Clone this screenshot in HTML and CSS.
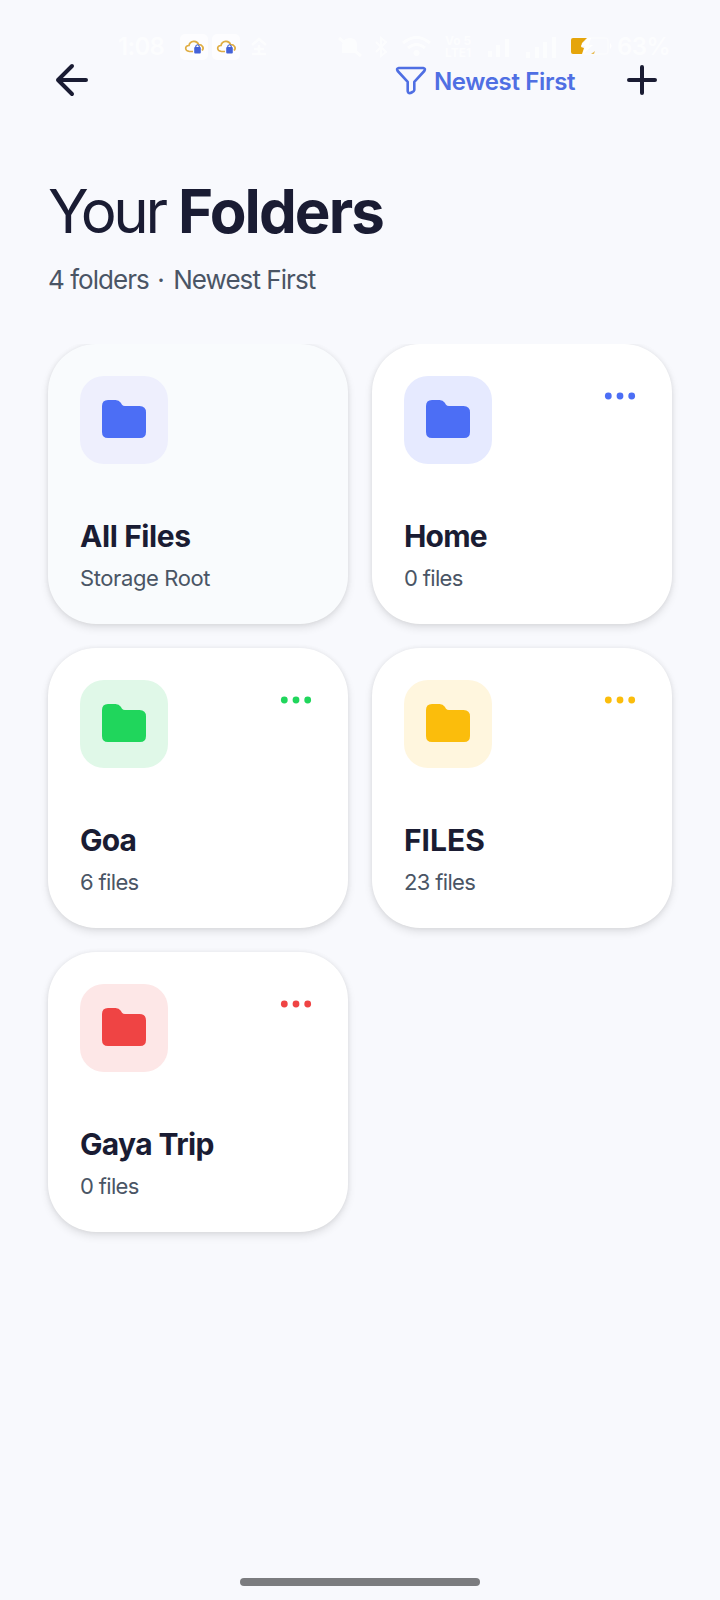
FILE: index.html
```
<!DOCTYPE html>
<html lang="en">
<head>
    <meta charset="UTF-8">
    <meta name="viewport" content="width=device-width, initial-scale=1.0">
    <title>Your Folders</title>
    <link rel="stylesheet" href="styles.css">
</head>
<body>
    <!-- shared icons -->
    <svg class="sprite" width="0" height="0">
        <symbol id="folder" viewBox="0 0 44 38">
            <path d="M6 0H13.500Q17 0 18.800 2.800L20 4.800Q21 6 23 6H37.500Q44 6 44 12.500V32Q44 38 38 38H6Q0 38 0 32V6Q0 0 6 0Z" fill="currentColor"/>
        </symbol>
        <symbol id="dots" viewBox="0 0 40 40">
            <g fill="currentColor">
                <circle cx="8.300" cy="20" r="3.400"/>
                <circle cx="20" cy="20" r="3.400"/>
                <circle cx="31.700" cy="20" r="3.400"/>
            </g>
        </symbol>
        <symbol id="cloud" viewBox="0 0 28 26">
            <rect width="28" height="26" rx="5" fill="#fff" fill-opacity=".7"/>
            <path d="M13 17.500H9.500C4.500 17 4.500 11.500 9 11.500C10 6.500 17 6 18.500 10.500C22.500 10.500 24.500 14 22 16.500" fill="none" stroke="#dfad43" stroke-width="1.700"/>
            <path d="M15.800 13.500V12Q17.500 9.500 19.200 12V13.500" fill="none" stroke="#4562d8" stroke-width="1.200"/>
            <rect x="14.200" y="13" width="6.600" height="6.600" rx="1" fill="#4562d8"/>
        </symbol>
    </svg>

    <div class="status-bar">
        <div class="status-left">
            <span class="time">1:08</span>
            <svg class="cloud" width="28" height="26"><use href="#cloud"/></svg>
            <svg class="cloud" width="28" height="26"><use href="#cloud"/></svg>
            <svg class="app faint" width="20" height="20" viewBox="0 0 20 20" fill="none" stroke="#fff" stroke-width="2.500"><path d="M3 8L10 2L17 8M5 12H15M3 17H17M10 8V17"/></svg>
        </div>
        <div class="status-right">
            <svg class="mute faint" width="26" height="22" viewBox="0 0 26 22"><path d="M5 17V9Q6 2 13 2Q20 2 20 9V17Z" fill="#fff"/><path d="M2 2L24 20" stroke="#fff" stroke-width="3"/></svg>
            <svg class="bluetooth faint" width="14" height="22" viewBox="0 0 14 22" fill="none" stroke="#fff" stroke-width="2"><path d="M2 6L12 16L7 20V2L12 6L2 16"/></svg>
            <svg class="wifi faint" width="33" height="24" viewBox="0 0 33 24" fill="none" stroke="#fff" stroke-width="3"><path d="M3 8Q16.500 -3 30 8M8 13Q16.500 6 25 13"/><circle cx="16.500" cy="18" r="3" fill="#fff" stroke="none"/></svg>
            <span class="volte">Vo 5<br>LTE1</span>
            <svg class="signal-one faint" width="21" height="20" viewBox="0 0 21 20" fill="#fff"><path d="M0 14H4V20H0ZM8 8H12V20H8ZM17 2H21V20H17Z"/></svg>
            <svg class="signal-two faint" width="30" height="22" viewBox="0 0 30 22" fill="#fff"><path d="M0 16H4V22H0ZM9 11H13V22H9ZM17 6H21V22H17ZM26 1H30V22H26Z"/></svg>
            <svg class="battery" width="42" height="18" viewBox="0 0 42 18">
                <rect x="1" y="1" width="36" height="16" rx="3" fill="none" stroke="#fff" stroke-opacity=".4" stroke-width="1.500"/>
                <path d="M2 1H16L11 6L10 10L13 11L11 17H2Q0 17 0 15V3Q0 1 2 1Z" fill="#e5a50b"/>
                <path d="M17 1L10 9H14L12 17L22 8H18L20 1Z" fill="#fff"/>
                <path d="M20 17L24 14L23 17Z" fill="#e8bd59"/>
                <path d="M39 6Q42 9 39 12Z" fill="#fff"/>
            </svg>
            <span class="percent">63%</span>
        </div>
    </div>

    <header class="top-bar">
        <svg class="back" width="36" height="36" viewBox="0 0 36 36"><path d="M32 18H4M18 4L4 18L18 32"/></svg>
        <div class="sort">
            <svg width="32" height="32" viewBox="0 0 32 32"><path d="M3.800 4H28.200Q31 4.500 29.300 7L19.300 17.800V26Q19 27.500 17.500 28L15.500 29Q13 29.500 12.700 27.200V17.800L2.700 7Q1 4.500 3.800 4Z"/></svg>
            <span>Newest First</span>
        </div>
        <svg class="add" width="36" height="36" viewBox="0 0 36 36"><path d="M18 5V31M5 18H31"/></svg>
    </header>

    <section class="heading">
        <h1>Your <b>Folders</b></h1>
        <p>4 folders <span class="sep">·</span> Newest First</p>
    </section>

    <main class="folders">
        <div class="card root">
            <div class="card-top">
                <div class="icon"><svg width="44" height="38"><use href="#folder"/></svg></div>
            </div>
            <h2>All Files</h2>
            <p>Storage Root</p>
        </div>
        <div class="card blue">
            <div class="card-top">
                <div class="icon"><svg width="44" height="38"><use href="#folder"/></svg></div>
                <svg class="more" width="40" height="40"><use href="#dots"/></svg>
            </div>
            <h2>Home</h2>
            <p>0 files</p>
        </div>
        <div class="card green">
            <div class="card-top">
                <div class="icon"><svg width="44" height="38"><use href="#folder"/></svg></div>
                <svg class="more" width="40" height="40"><use href="#dots"/></svg>
            </div>
            <h2>Goa</h2>
            <p>6 files</p>
        </div>
        <div class="card yellow">
            <div class="card-top">
                <div class="icon"><svg width="44" height="38"><use href="#folder"/></svg></div>
                <svg class="more" width="40" height="40"><use href="#dots"/></svg>
            </div>
            <h2>FILES</h2>
            <p>23 files</p>
        </div>
        <div class="card red">
            <div class="card-top">
                <div class="icon"><svg width="44" height="38"><use href="#folder"/></svg></div>
                <svg class="more" width="40" height="40"><use href="#dots"/></svg>
            </div>
            <h2>Gaya Trip</h2>
            <p>0 files</p>
        </div>
    </main>

    <div class="home-bar"></div>
</body>
</html>
```
FILE: styles.css
```
* {
    box-sizing: border-box;
}

body {
    margin: 0;
    height: 1600px;
    overflow: hidden;
    display: flex;
    flex-direction: column;
    background: #f8f9fd;
    color: #1a1c33;
    font-family: Inter, "Liberation Sans", sans-serif;
}

svg {
    display: block;
    flex-shrink: 0;
}

.sprite {
    position: absolute;
}

h1, h2, p {
    margin: 0;
}

/* system status bar, white on the light page */
.status-bar {
    height: 60px;
    padding: 33px 49px 0 118px;
    display: flex;
    justify-content: space-between;
    color: rgba(255, 255, 255, 0.7);
    line-height: 28px;
}

.status-left, .status-right {
    display: flex;
    align-items: center;
    height: 28px;
}

.faint {
    opacity: 0.7;
}

.time {
    width: 62px;
    font-size: 24px;
    font-weight: 600;
    letter-spacing: -0.7px;
}

.cloud {
    margin-right: 4px;
}

.app {
    margin-left: 5px;
}

.bluetooth {
    margin-left: 11px;
}

.wifi {
    margin-left: 12px;
}

.volte {
    width: 32px;
    margin-left: 12px;
    font-size: 12px;
    line-height: 12px;
    font-weight: 700;
}

.signal-one {
    margin-left: 11px;
}

.signal-two {
    margin-left: 17px;
}

.battery {
    margin-left: 15px;
    margin-bottom: 2px;
}

.percent {
    width: 54px;
    margin-left: 4px;
    font-size: 24px;
    font-weight: 600;
    letter-spacing: -0.5px;
}

.top-bar {
    height: 40px;
    padding: 0 60px 0 54px;
    display: flex;
    align-items: center;
}

.back, .add {
    fill: none;
    stroke: #1a1c33;
    stroke-width: 4;
    stroke-linecap: round;
    stroke-linejoin: round;
}

.sort {
    display: flex;
    align-items: center;
    gap: 7px;
    margin-left: auto;
    color: #4f6fe3;
    font-size: 24px;
    font-weight: 600;
    line-height: 32px;
    white-space: nowrap;
}

.sort svg {
    fill: none;
    stroke: #4f6fe3;
    stroke-width: 2.6;
    stroke-linejoin: round;
}

.sort span {
    width: 142px;
    letter-spacing: -0.35px;
    padding-top: 3px;
}

.add {
    margin-left: 48px;
}

.heading {
    height: 244px;
    padding: 75px 48px 0;
}

.heading h1 {
    font-size: 60px;
    line-height: 72px;
    font-weight: 400;
    letter-spacing: -3.4px;
}

.heading b {
    font-weight: 750;
    letter-spacing: -1.9px;
}

.heading p {
    margin-top: 16px;
    color: #4a5565;
    font-size: 26px;
    line-height: 34px;
    letter-spacing: -0.95px;
}

.sep {
    margin: 0 3px 0 2px;
}

.folders {
    display: grid;
    grid-template-columns: 300px 300px;
    grid-auto-rows: 280px;
    gap: 24px;
    padding: 0 48px;
    height: 1234px;
    overflow: hidden; /* trims the shadow above the first row */
}

.card {
    padding: 32px;
    border-radius: 48px;
    background: #fff;
    box-shadow: 0 4px 8px rgba(0, 0, 0, 0.1), 0 0 5px rgba(0, 0, 0, 0.07);
}

.card-top {
    display: flex;
    justify-content: space-between;
    margin-bottom: 54px;
}

.icon {
    width: 88px;
    height: 88px;
    padding: 24px 22px;
    border-radius: 24px;
}

.card h2 {
    color: #1a1c33;
    font-size: 30px;
    line-height: 36px;
    font-weight: 700;
    letter-spacing: -0.8px;
}

.card p {
    margin-top: 10px;
    color: #4a5565;
    font-size: 22px;
    line-height: 29px;
    letter-spacing: -0.65px;
}

.root { background: #f9fbfd; }
.root, .blue { color: #4c6ef5; }
.green { color: #20d65c; }
.yellow { color: #fbbd0c; }
.red { color: #ef4444; }

.root .icon { background: #eeeffd; }
.blue .icon { background: #e6eaff; }
.green .icon { background: #e0f8e8; }
.yellow .icon { background: #fff6de; }
.red .icon { background: #fde7e7; }

.root h2 { letter-spacing: -0.4px; }
.root p { letter-spacing: -0.4px; }
.yellow h2 { letter-spacing: 0; }
.red h2 { letter-spacing: -0.65px; }

.home-bar {
    width: 240px;
    height: 8px;
    margin: 0 auto;
    border-radius: 4px;
    background: #7b7c7f;
}
```
